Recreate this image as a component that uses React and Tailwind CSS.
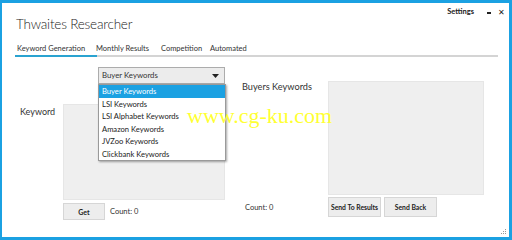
const font = { fontFamily: 'Lato, "Noto Sans", sans-serif' }

const options = [
  'Buyer Keywords',
  'LSI Keywords',
  'LSI Alphabet Keywords',
  'Amazon Keywords',
  'JVZoo Keywords',
  'Clickbank Keywords',
]

function Tab({ label, className = '' }) {
  return (
    <div className={`text-[7.5px] whitespace-nowrap text-[#333] ${className}`}>
      {label}
    </div>
  )
}

export default function App() {
  return (
    <div
      className="relative w-[512px] h-[240px] overflow-hidden bg-white border-[#1ba1e2] border-t-[3px] border-l-2 border-r-[3px] border-b-[3px]"
      style={font}
    >
      {/* header */}
      <div className="flex items-start justify-between">
        <div className="pl-[14px] pt-[11px] text-[13.5px] tracking-[-0.2px] font-light text-[#222]">
          Thwaites Researcher
        </div>
        <div className="flex items-center pt-[3px] pr-[4px] gap-[13px] text-[7.5px] font-bold text-[#222]">
          <span>Settings</span>
          <span className="flex items-center gap-[7px]">
            <span className="block w-[4px] h-[1.5px] bg-[#222] mt-[3px]"></span>
            <span className="text-[8px] font-normal leading-none">✕</span>
          </span>
        </div>
      </div>

      {/* tabs */}
      <div className="mt-[8px] ml-[13px] w-[483px]">
        <div className="flex items-end h-[12px] pl-[2px]">
          <Tab label="Keyword Generation" className="w-[79px]" />
          <Tab label="Monthly Results" className="w-[65px]" />
          <Tab label="Competition" className="w-[49px]" />
          <Tab label="Automated" />
        </div>
        <div className="flex mt-[1px] h-[2px]">
          <div className="w-[82px] bg-[#2aa3d0]"></div>
          <div className="flex-1 h-[2px] bg-[#d4d4d4]"></div>
        </div>
      </div>

      {/* content */}
      <div className="flex mt-[10px] text-[#333]">
        <div className="w-[61px] pl-[18px] pt-[38px] text-[9px]">Keyword</div>

        <div className="w-[162px]">
          <div className="ml-[35px] w-[127px] h-[17px] flex items-center justify-between border border-[#acacac] bg-[#ececec] pl-[3px] pr-[5px] text-[7.8px]">
            <span>Buyer Keywords</span>
            <svg width="7" height="4" viewBox="0 0 7 4">
              <path d="M0 0h7L3.5 4z" fill="#222" />
            </svg>
          </div>
          <div className="mt-[20px] h-[96px] bg-[#efefef] border border-[#e6e6e6]"></div>
          <div className="flex items-center mt-[3px]">
            <button className="w-[42px] h-[17px] bg-[#ededed] border border-[#d6d6d6] text-[7px] font-bold text-[#222]">
              Get
            </button>
            <span className="ml-[5px] text-[7.5px]">Count: 0</span>
          </div>
        </div>

        <div className="w-[103px] pl-[17px] flex flex-col">
          <div className="pt-[13px] text-[9.2px]">Buyers Keywords</div>
          <div className="mt-[108px] pl-[3px] text-[7.5px]">Count: 0</div>
        </div>

        <div className="w-[156px] pt-[14px]">
          <div className="h-[114px] bg-[#efefef] border border-[#e6e6e6]"></div>
          <div className="flex gap-[3px] mt-[2px]">
            <button className="w-[53px] h-[20px] whitespace-nowrap bg-[#ededed] border border-[#d6d6d6] text-[6.8px] font-bold text-[#222]">
              Send To Results
            </button>
            <button className="w-[53px] h-[20px] whitespace-nowrap bg-[#ededed] border border-[#d6d6d6] text-[6.8px] font-bold text-[#222]">
              Send Back
            </button>
          </div>
        </div>
      </div>

      {/* open dropdown list */}
      <div className="absolute left-[96px] top-[81px] w-[128px] bg-white border border-[#9a9a9a] shadow-[1px_1px_2px_rgba(0,0,0,0.35)] text-[7.6px] text-[#222]">
        {options.map((o, i) => (
          <div
            key={o}
            className={`h-[12.5px] leading-[12.5px] pl-[3px] ${i === 0 ? 'bg-[#1ba1e2] text-white' : ''}`}
          >
            {o}
          </div>
        ))}
      </div>

      {/* watermark */}
      <div
        className="absolute left-[185px] top-[102px] text-[22px] text-[#ffff33] leading-none whitespace-nowrap"
        style={{ fontFamily: '"Liberation Serif", serif' }}
      >
        www.cg-ku.com
      </div>

      {/* resize grip */}
      <svg className="absolute right-[2px] bottom-[2px]" width="6" height="6" viewBox="0 0 6 6">
        <rect x="4" y="0" width="1" height="1" fill="#999" />
        <rect x="2" y="2" width="1" height="1" fill="#999" />
        <rect x="4" y="2" width="1" height="1" fill="#999" />
        <rect x="0" y="4" width="1" height="1" fill="#999" />
        <rect x="2" y="4" width="1" height="1" fill="#999" />
        <rect x="4" y="4" width="1" height="1" fill="#999" />
      </svg>
    </div>
  )
}
